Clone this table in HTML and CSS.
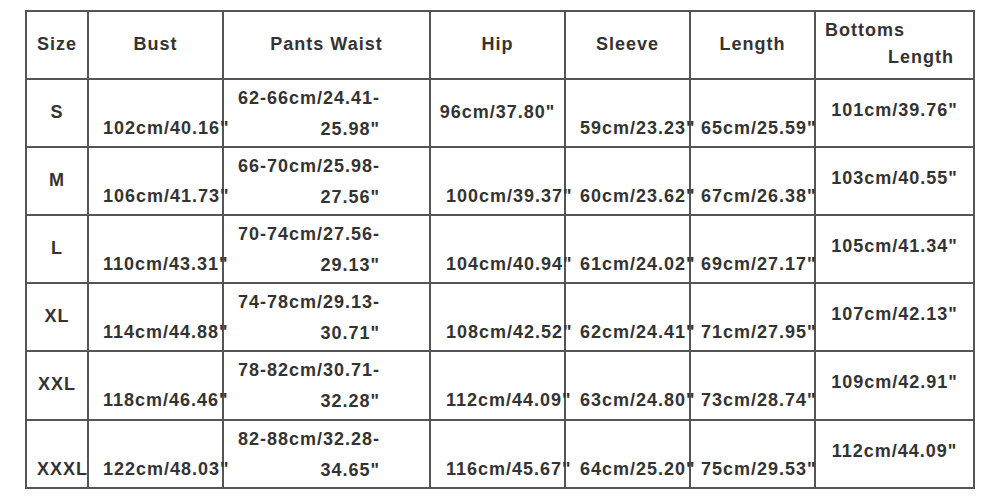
FILE: index.html
```html
<!DOCTYPE html>
<html lang="en">
<head>
<meta charset="utf-8">
<title>Size Chart</title>
<link rel="stylesheet" href="styles.css">
</head>
<body>
<table class="chart">
  <colgroup>
    <col class="w-size">
    <col class="w-bust">
    <col class="w-pw">
    <col class="w-hip">
    <col class="w-slv">
    <col class="w-len">
    <col class="w-bl">
  </colgroup>
  <tr class="r-hd">
    <th class="v-hd h-c">Size</th>
    <th class="v-hd h-c">Bust</th>
    <th class="v-hd h-c">Pants Waist</th>
    <th class="v-hd h-c">Hip</th>
    <th class="v-hd h-c">Sleeve</th>
    <th class="v-hd h-c">Length</th>
    <th class="v-hd2"><span class="hd-a">Bottoms</span><span class="hd-b">Length</span></th>
  </tr>
  <tr>
    <td class="v-mid h-c">S</td>
    <td class="v-bot h-bust">102cm/40.16"</td>
    <td class="v-top h-pw">62-66cm/24.41-<br>25.98"</td>
    <td class="v-mid h-c">96cm/37.80"</td>
    <td class="v-bot h-slv">59cm/23.23"</td>
    <td class="v-bot h-len">65cm/25.59"</td>
    <td class="v-bl h-c">101cm/39.76"</td>
  </tr>
  <tr>
    <td class="v-mid h-c">M</td>
    <td class="v-bot h-bust">106cm/41.73"</td>
    <td class="v-top h-pw">66-70cm/25.98-<br>27.56"</td>
    <td class="v-bot h-hip">100cm/39.37"</td>
    <td class="v-bot h-slv">60cm/23.62"</td>
    <td class="v-bot h-len">67cm/26.38"</td>
    <td class="v-bl h-c">103cm/40.55"</td>
  </tr>
  <tr>
    <td class="v-mid h-c">L</td>
    <td class="v-bot h-bust">110cm/43.31"</td>
    <td class="v-top h-pw">70-74cm/27.56-<br>29.13"</td>
    <td class="v-bot h-hip">104cm/40.94"</td>
    <td class="v-bot h-slv">61cm/24.02"</td>
    <td class="v-bot h-len">69cm/27.17"</td>
    <td class="v-bl h-c">105cm/41.34"</td>
  </tr>
  <tr>
    <td class="v-mid h-c">XL</td>
    <td class="v-bot h-bust">114cm/44.88"</td>
    <td class="v-top h-pw">74-78cm/29.13-<br>30.71"</td>
    <td class="v-bot h-hip">108cm/42.52"</td>
    <td class="v-bot h-slv">62cm/24.41"</td>
    <td class="v-bot h-len">71cm/27.95"</td>
    <td class="v-bl h-c">107cm/42.13"</td>
  </tr>
  <tr class="r-tall">
    <td class="v-mid h-c">XXL</td>
    <td class="v-bot h-bust">118cm/46.46"</td>
    <td class="v-top h-pw">78-82cm/30.71-<br>32.28"</td>
    <td class="v-bot h-hip">112cm/44.09"</td>
    <td class="v-bot h-slv">63cm/24.80"</td>
    <td class="v-bot h-len">73cm/28.74"</td>
    <td class="v-bl h-c">109cm/42.91"</td>
  </tr>
  <tr>
    <td class="v-bot h-xl">XXXL</td>
    <td class="v-bot h-bust">122cm/48.03"</td>
    <td class="v-top h-pw">82-88cm/32.28-<br>34.65"</td>
    <td class="v-bot h-hip">116cm/45.67"</td>
    <td class="v-bot h-slv">64cm/25.20"</td>
    <td class="v-bot h-len">75cm/29.53"</td>
    <td class="v-bl h-c">112cm/44.09"</td>
  </tr>
</table>
</body>
</html>
```
FILE: styles.css
```css
html, body {
  background: #ffffff;
}
body {
  margin: 10px 0 0 25px;
  font-family: "Liberation Sans", Arial, sans-serif;
  font-weight: bold;
  font-size: 18px;
  letter-spacing: 1px;
  color: #333333;
}
.chart {
  border-collapse: collapse;
  table-layout: fixed;
  width: 950px;
  border: 2px solid #555555;
}
.w-size { width: 62px; }
.w-bust { width: 135px; }
.w-pw { width: 207px; }
.w-hip { width: 135px; }
.w-slv { width: 125px; }
.w-len { width: 125px; }
.w-bl { width: 159px; }
tr { height: 68px; }
tr.r-tall { height: 69px; }
th, td {
  border: 2px solid #555555;
  padding: 0;
  vertical-align: top;
  line-height: 31px;
  white-space: nowrap;
  font-weight: bold;
  text-align: left;
}
/* vertical placement */
.v-hd { padding-top: 17px; }
.v-top { padding-top: 3px; }
.v-mid { padding-top: 17px; }
.v-bot { padding-top: 33px; }
.v-bl { padding-top: 15px; }
.v-hd2 {
  padding: 5px 19px 0 9px;
  line-height: 27px;
}
.hd-a { display: block; text-align: left; }
.hd-b { display: block; text-align: right; }
/* horizontal placement */
.h-c { text-align: center; }
.h-bust { padding-left: 14px; }
.h-pw { padding-left: 12px; padding-right: 49px; text-align: right; }
.h-hip { padding-left: 15px; }
.h-slv { padding-left: 14px; }
.h-len { padding-left: 10px; }
.h-xl { padding-left: 10px; }
```
